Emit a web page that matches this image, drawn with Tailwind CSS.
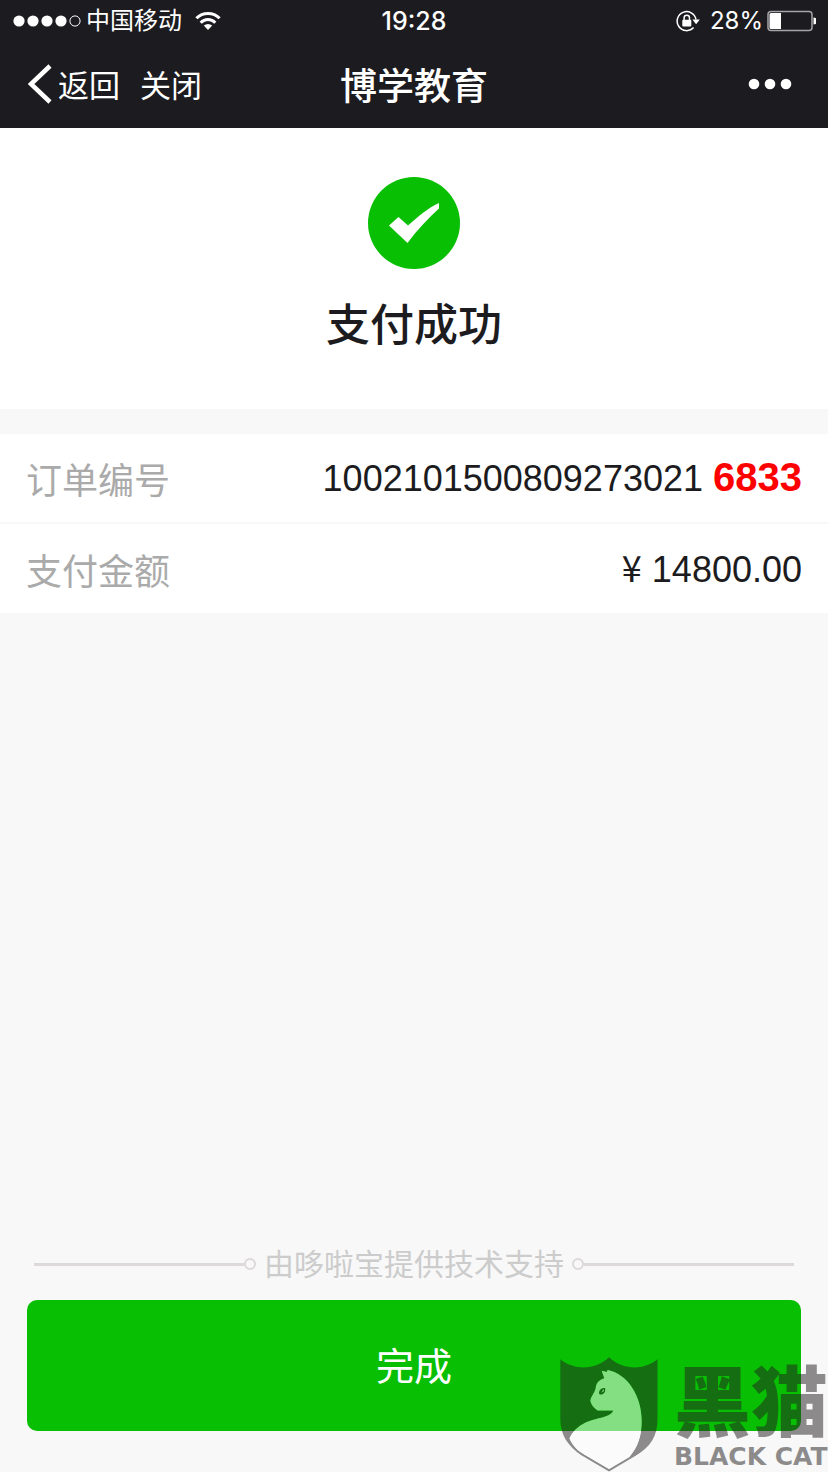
<!DOCTYPE html>
<html lang="zh-CN">
    <head>
        <title>支付成功</title>
        <meta charset="utf-8">
        <meta name="viewport" content="width=device-width, initial-scale=1.0">
        <script src="https://cdn.jsdelivr.net/npm/@tailwindcss/browser@4"></script>
    </head>
    <body class="relative flex flex-col min-h-screen overflow-x-hidden bg-[#f8f8f8] text-[#1c1b20] font-['Noto_Sans_CJK_SC',sans-serif]">
        <header class="bg-[#1c1b20] text-white">
            <!-- status bar -->
            <div class="grid grid-cols-3 items-center h-[42px] px-3 text-2xl leading-10 font-['Inter','Noto_Sans_CJK_SC',sans-serif]">
                <div class="flex items-center">
                    <svg class="w-[70px] h-3 mr-1" viewBox="0 0 70 12" fill="#fff">
                        <circle cx="7" cy="6" r="5.6"/>
                        <circle cx="21" cy="6" r="5.6"/>
                        <circle cx="35" cy="6" r="5.6"/>
                        <circle cx="49" cy="6" r="5.6"/>
                        <circle cx="63" cy="6" r="5.1" fill="none" stroke="#fff" stroke-width="1"/>
                    </svg>
                    <span class="whitespace-nowrap">中国移动</span>
                    <svg class="w-7 h-5 ml-3" viewBox="0 0 28 20" fill="none" stroke="#fff" stroke-width="3">
                        <path d="M2.4 7.3a16.2 16.2 0 0 1 23.2 0"/>
                        <path d="M6.7 11.7a10.2 10.2 0 0 1 14.6 0"/>
                        <path d="M14 19l-4.2-4.4a6 6 0 0 1 8.4 0z" fill="#fff" stroke="none"/>
                    </svg>
                </div>
                <div class="text-center text-[25px] font-medium">19:28</div>
                <div class="flex items-center justify-end">
                    <svg class="w-6 h-6 mr-2.5" viewBox="0 0 24 24" fill="none" stroke="#fff" stroke-width="1.5">
                        <path d="M17.6 18.6A9.5 9.5 0 1 1 20 10.5"/>
                        <path d="M16.4 10.6h7.4l-3.7 4.6z" fill="#fff" stroke="none"/>
                        <rect x="6.3" y="10.8" width="9" height="6.8" rx="1" fill="#fff" stroke="none"/>
                        <path d="M8.1 11V9a2.7 2.7 0 0 1 5.4 0v2"/>
                    </svg>
                    <span>28%</span>
                    <svg class="w-[49px] h-[22px] ml-1 shrink-0" viewBox="0 0 49 22">
                        <rect x="1" y="1.5" width="44" height="19" rx="3" fill="none" stroke="#a5a5a8" stroke-width="1.5"/>
                        <path d="M4 3h10v16H4a1.5 1.5 0 0 1-1.5-1.5v-13A1.5 1.5 0 0 1 4 3z" fill="#fff"/>
                        <path d="M46.5 7.5a3.5 3.5 0 0 1 0 7z" fill="#fff"/>
                    </svg>
                </div>
            </div>
            <!-- nav bar -->
            <nav class="grid grid-cols-3 items-center h-[86px] px-7 pb-0.5 text-[31px] leading-10">
                <div class="flex items-center">
                    <a href="#" class="flex items-center">
                        <svg class="w-6 h-10 mr-1.5" viewBox="0 0 24 40" fill="none" stroke="#fff" stroke-width="4.5">
                            <path d="M22 2L3 20l19 18"/>
                        </svg>返回</a>
                    <a href="#" class="ml-5">关闭</a>
                </div>
                <h1 class="text-center text-[37px] font-medium">博学教育</h1>
                <button type="button" class="justify-self-end mr-2" aria-label="更多">
                    <svg class="w-11 h-3" viewBox="0 0 44 12" fill="#fff">
                        <circle cx="6" cy="6" r="5.3"/>
                        <circle cx="22" cy="6" r="5.3"/>
                        <circle cx="38" cy="6" r="5.3"/>
                    </svg>
                </button>
            </nav>
        </header>

        <main class="flex flex-col grow">
            <section class="flex flex-col items-center pt-[49px] pb-[50px] bg-white">
                <svg class="w-[92px] h-[92px]" viewBox="0 0 92 92">
                    <circle cx="46" cy="46" r="46" fill="#08bf04"/>
                    <path d="M21 48.5l9.500-8.500 9.500 8.500C50 39.5 60 31 71 26v5.5C60 41.5 49 53 39.5 66z" fill="#fff"/>
                </svg>
                <h2 class="mt-5 mb-1 text-[44px] leading-[66px] font-medium">支付成功</h2>
            </section>

            <dl class="mt-[25px] bg-white text-4xl leading-10 font-['Liberation_Sans','Noto_Sans_CJK_SC',sans-serif]">
                <div class="flex items-center justify-between h-[90px] px-[26px] border-b-2 border-[#f8f8f8]">
                    <dt class="text-[#aaa] font-['Noto_Sans_CJK_SC',sans-serif]">订单编号</dt>
                    <dd>1002101500809273021 <b class="text-[40px] text-[#f00]">6833</b></dd>
                </div>
                <div class="flex items-center justify-between h-[89px] px-[26px]">
                    <dt class="text-[#aaa] font-['Noto_Sans_CJK_SC',sans-serif]">支付金额</dt>
                    <dd><span class="leading-none font-['Noto_Sans_CJK_SC',sans-serif]">¥</span> 14800.00</dd>
                </div>
            </dl>
        </main>

        <footer class="pb-[41px]">
            <div class="flex items-center px-[34px] mb-3 text-[30px] leading-11 text-[#ccc]">
                <i class="grow h-[3px] bg-[#ddd8da]"></i>
                <i class="w-3 h-3 border-2 border-[#ddd8da] rounded-full"></i>
                <span class="mx-2 pb-1">由哆啦宝提供技术支持</span>
                <i class="w-3 h-3 border-2 border-[#ddd8da] rounded-full"></i>
                <i class="grow h-[3px] bg-[#ddd8da]"></i>
            </div>
            <div class="px-[27px]">
                <button type="button" class="block w-full h-[131px] pb-1 rounded-[10px] bg-[#08bf04] text-white text-[38px]">完成</button>
            </div>
        </footer>

        <!-- watermark -->
        <div class="absolute right-0 bottom-0 flex items-end text-[#231f20] pointer-events-none">
            <svg class="w-[98px] h-[115px] mr-4 opacity-50" viewBox="0 0 98 115">
                <path fill-rule="evenodd" fill="#231f20" d="M.3 2.3C14 13.5 35 13.5 49 .3c14 13.2 35 13.2 48.5 2V62C97.5 80 90 90 76 98.5L49 114.5 21 98C8 89 .3 78 .3 62zM41.7 13.7l2.6 7.6c-4.5 1.5-7.5 4-8.3 7.7-.5 4-1 5-2.5 7.5-1.5 3-3.5 5-3 8 1 4 4 7 7.2 8.900H53.3c-1.5 4-7 6-13.3 7.5-12 3-24 6.5-30.500 20.6C13 89 18 94 24.3 97.5L49 112l20.3-12c9-10.5 12.4-22 12.4-36 0-25-14-47-34-51l-1 2z"/>
                <path fill="#fff" d="M41.7 13.7l2.6 7.6c-4.5 1.5-7.5 4-8.3 7.7-.5 4-1 5-2.5 7.5-1.5 3-3.5 5-3 8 1 4 4 7 7.2 8.900H53.3c-1.5 4-7 6-13.3 7.5-12 3-24 6.5-30.500 20.6C13 89 18 94 24.3 97.5L49 112l20.3-12c9-10.5 12.4-22 12.4-36 0-25-14-47-34-51l-1 2z"/>
                <path fill="#231f20" fill-rule="evenodd" d="M39 36.5c0-4 2.5-5.5 6-5.5 1 3.5-1 7-5 6.5zM41.5 35.5l2-3.5.5 2z"/>
            </svg>
            <div class="flex flex-col opacity-50 whitespace-nowrap">
                <span class="text-[77px] leading-[88px] font-black">黑猫</span>
                <span class="text-[25px] leading-[30px] font-bold font-['DejaVu_Sans',sans-serif]">BLACK CAT</span>
            </div>
        </div>
    </body>
</html>
